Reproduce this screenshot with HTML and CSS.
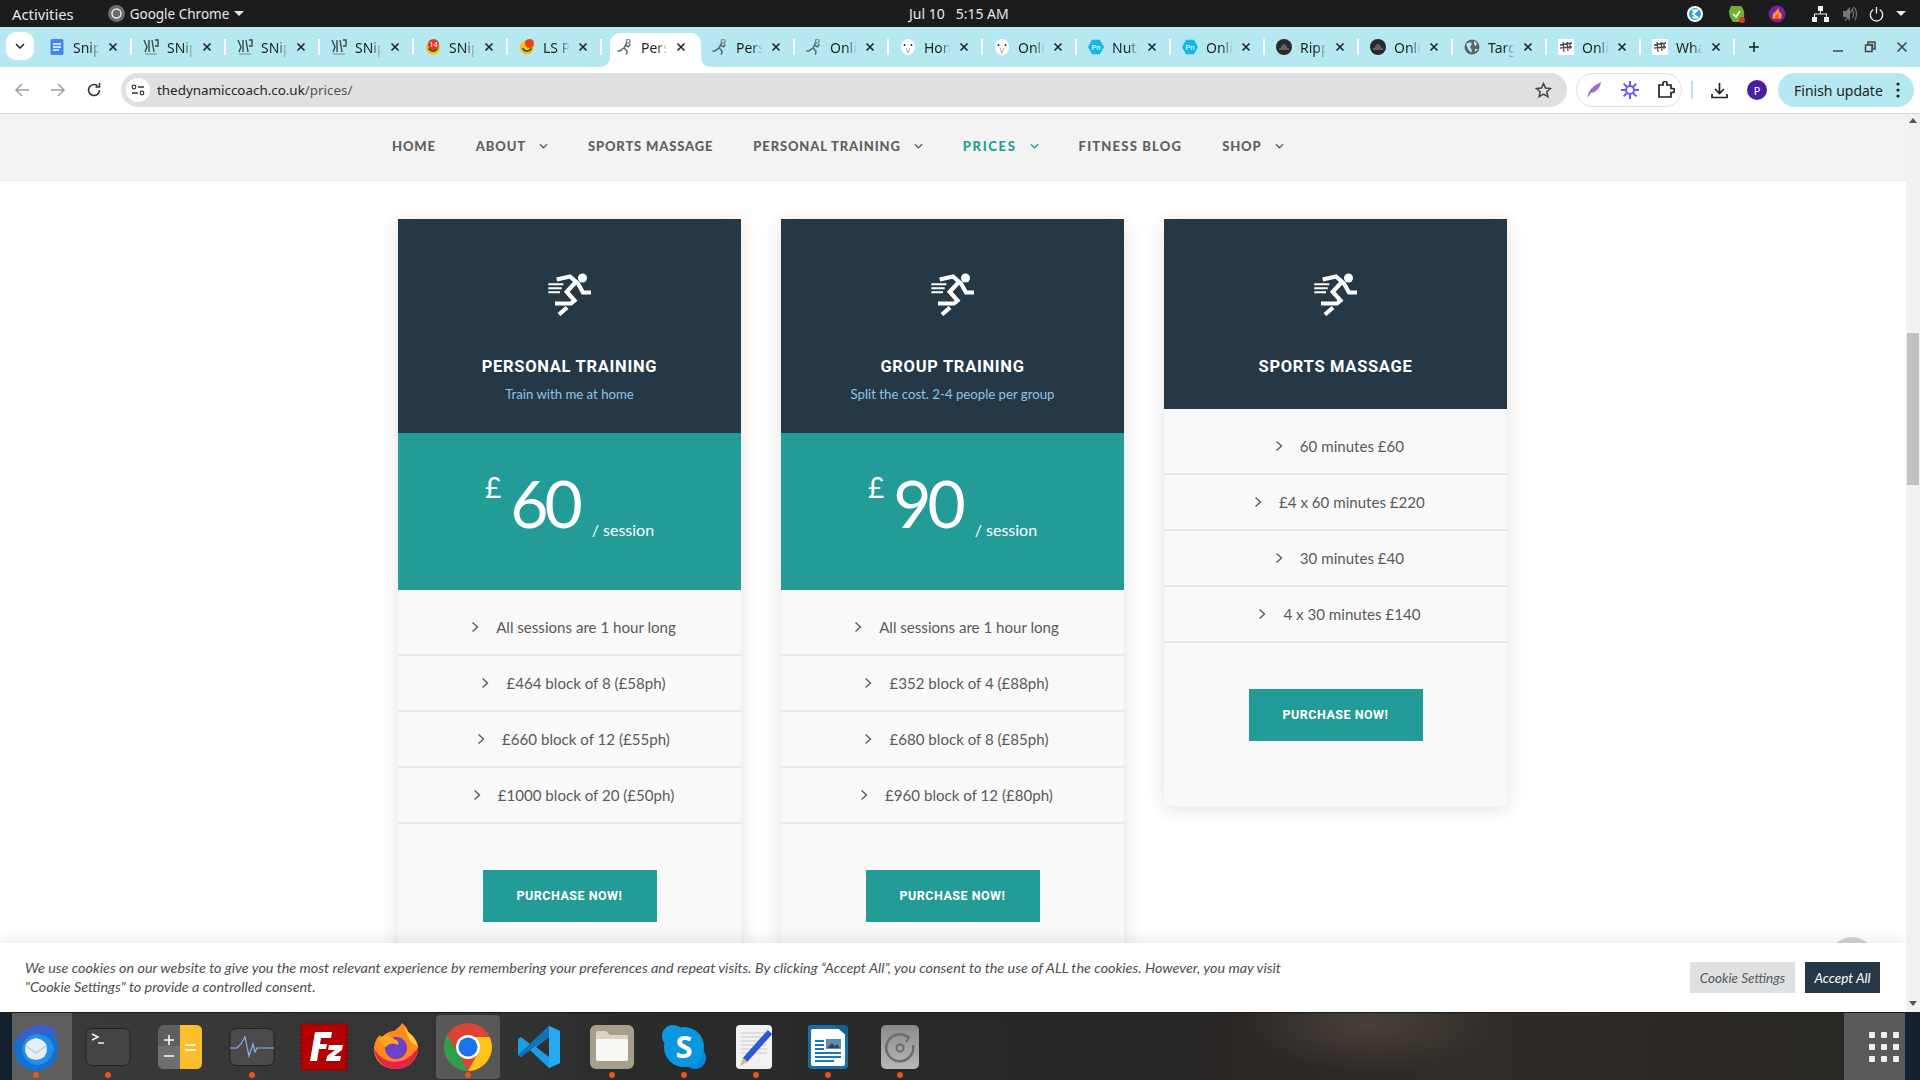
FILE: index.html
```html
<!DOCTYPE html>
<html lang="en">
<head>
    <meta charset="UTF-8">
    <title>Personal Training Prices</title>
    <link rel="stylesheet" href="styles.css">
</head>
<body>
    <svg class="defs" width="0" height="0">
        <symbol id="runner" viewBox="0 0 43 43">
            <circle cx="34.5" cy="5" r="4.5" fill="currentColor"/>
            <path d="M8.7 6.5 22 3.500 30 10.500 35 19.500H43M27 10 18.700 18.700 26.500 27.500 23 30.500H7M19 34.500 11 41.500" fill="none" stroke="currentColor" stroke-width="4.200"/>
            <path d="M.3 11.300H15.300M.3 15.300H13.700M.3 19.300H12" fill="none" stroke="currentColor" stroke-width="2"/>
        </symbol>
        <symbol id="close" viewBox="0 0 10 10">
            <path d="M1.500 1.500 8.500 8.500M8.500 1.500 1.500 8.500" fill="none" stroke="currentColor" stroke-width="1.600"/>
        </symbol>
        <symbol id="chev" viewBox="0 0 8 12">
            <path d="M1.500 1.500 6.500 6 1.500 10.500" fill="none" stroke="currentColor" stroke-width="1.400"/>
        </symbol>
        <symbol id="chev-down" viewBox="0 0 10 6">
            <path d="M1 1 5 5 9 1" fill="none" stroke="currentColor" stroke-width="1.500"/>
        </symbol>
        <symbol id="fav-snip" viewBox="0 0 16 16">
            <rect width="16" height="16" fill="#b6e8f1"/>
            <path d="M1 1 4 8 2 13M6 1V13M9 1 11 13M12 1 15 1 15 7 12 7" fill="none" stroke="#3d4a4a" stroke-width="1.400"/>
            <path d="M2 15H14" stroke="#7a8a8a" stroke-width="1"/>
        </symbol>
        <symbol id="fav-smile" viewBox="0 0 16 16">
            <circle cx="8" cy="8.500" r="7" fill="#f1c40f"/>
            <path d="M3.500 9.500Q8 15 12.500 9.500" fill="none" stroke="#333" stroke-width="1.500"/>
        </symbol>
        <symbol id="fav-run" viewBox="0 0 43 43">
            <circle cx="30" cy="6" r="5" fill="none" stroke="#6fa09c" stroke-width="4"/>
            <path d="M26 10 19 24 27 33 25 42M19 24 8 32H1M22 16 32 22M36 14 30 22" fill="none" stroke="#596a6a" stroke-width="4"/>
        </symbol>
        <symbol id="fav-owl" viewBox="0 0 16 16">
            <ellipse cx="8" cy="8" rx="7" ry="8" fill="#fff"/>
            <path d="M4.500 5V7M11.500 5V7" stroke="#333" stroke-width="1.500"/>
            <path d="M6 9 8 14 10 9" fill="none" stroke="#aaa" stroke-width="1"/>
        </symbol>
        <symbol id="fav-pn" viewBox="0 0 16 16">
            <path d="M4 .8H12L16 8 12 15.200H4L0 8Z" fill="#16b8e0"/>
            <text x="8" y="10.800" font-size="7.500" text-anchor="middle" fill="#fff" font-family="Roboto, sans-serif">Pn</text>
        </symbol>
        <symbol id="fav-dark" viewBox="0 0 16 16">
            <circle cx="8" cy="8" r="8" fill="#2a2a2a"/>
            <path d="M3 10H13M5 8H11M6.500 6H9.500" stroke="#9a9a9a" stroke-width="1.200"/>
        </symbol>
        <symbol id="fav-globe" viewBox="0 0 16 16">
            <circle cx="8" cy="8" r="7.500" fill="#5f6368"/>
            <path d="M2 5 6 3 8 5 6 8 8 11 7 14 4 10ZM10 2 13 4 12 7 10 6ZM11 10H14L11 13Z" fill="#b6e8f1"/>
        </symbol>
        <symbol id="fav-sketch" viewBox="0 0 16 16">
            <rect width="16" height="16" fill="#fff"/>
            <path d="M2 6 14 4M2 9 14 8M5 3 6 13M9 3 10 12M12 4 12 10" stroke="#4a4a4a" stroke-width="1.300"/>
        </symbol>
    </svg>

    <header class="topbar">
        <span class="top-left">Activities</span>
        <span class="top-app">
            <svg width="17" height="17" viewBox="0 0 17 17"><circle cx="8.500" cy="8.500" r="8.500" fill="#6b6b6b"/><circle cx="8.500" cy="8.500" r="4.500" fill="none" stroke="#e8e8e8" stroke-width="1.500"/></svg>
            Google Chrome
            <i class="caret"></i>
        </span>
        <span class="clock">Jul 10 &nbsp; 5:15 AM</span>
        <div class="tray">
            <svg class="tray-a" width="18" height="18" viewBox="0 0 18 18"><circle cx="9" cy="9" r="8" fill="#fff"/><circle cx="9" cy="9" r="6" fill="#2fa7c6"/><path d="M6 5.500H11L7 9 11.500 12.500H6.500" fill="none" stroke="#fff" stroke-width="1.800"/></svg>
            <svg class="tray-b" width="18" height="18" viewBox="0 0 18 18"><path d="M3 1H13Q17 5 16 12L11 17H5Q1 12 1 6Z" fill="#6fae2e"/><path d="M5 9 8 12 12 6" fill="none" stroke="#fff" stroke-width="1.700"/><circle cx="14" cy="15" r="3" fill="#e0352b"/></svg>
            <svg class="tray-c" width="18" height="18" viewBox="0 0 18 18"><circle cx="9" cy="9" r="8.500" fill="#7d1e9c"/><path d="M5 14Q3 9 7 7 8 5 11 3 10 7 13 8 15 12 12 14Z" fill="#f59a23"/><path d="M7 14Q7 10 10 9 10 12 11.500 14Z" fill="#f04a3a"/></svg>
            <svg class="tray-net" width="17" height="16" viewBox="0 0 17 16"><path d="M6 0H11V5H6ZM0 11H5V16H0ZM12 11H17V16H12ZM8 5H9V7.500H15V11H14V8.500H3V11H2V7.500H8Z" fill="#f2f2f2"/></svg>
            <svg class="tray-vol" width="15" height="16" viewBox="0 0 15 16"><path d="M0 5H3L7 1V15L3 11H0Z" fill="#777"/><path d="M9.500 4Q11.500 8 9.500 12M12 2Q15 8 12 14M2 15 11 1" fill="none" stroke="#777" stroke-width="1.200"/></svg>
            <svg class="tray-pow" width="15" height="16" viewBox="0 0 15 16"><path d="M4.300 3.500A6.200 6.200 0 1 0 10.700 3.500M7.500 1V7.500" fill="none" stroke="#eee" stroke-width="1.300"/></svg>
            <i class="caret tray-caret"></i>
        </div>
    </header>

    <nav class="tabstrip">
        <button class="tab-search"><svg width="10" height="6"><use href="#chev-down"/></svg></button>
        <div class="tabs">
            <div class="tab"><svg class="fav" viewBox="0 0 16 16"><rect x="1.500" width="13" height="16" rx="1.500" fill="#4285f4"/><path d="M4 5H12M4 8H12M4 11H10" stroke="#fff" stroke-width="1.400"/></svg><span class="tab-label">Snip</span><svg class="tab-x"><use href="#close"/></svg></div>
            <div class="tab"><svg class="fav"><use href="#fav-snip"/></svg><span class="tab-label">SNip</span><svg class="tab-x"><use href="#close"/></svg></div>
            <div class="tab"><svg class="fav"><use href="#fav-snip"/></svg><span class="tab-label">SNip</span><svg class="tab-x"><use href="#close"/></svg></div>
            <div class="tab"><svg class="fav"><use href="#fav-snip"/></svg><span class="tab-label">SNip</span><svg class="tab-x"><use href="#close"/></svg></div>
            <div class="tab"><svg class="fav" viewBox="0 0 16 16"><use href="#fav-smile"/><circle cx="8.500" cy="5.500" r="5.500" fill="#e0352b"/><text x="8.500" y="8.200" font-size="7.500" text-anchor="middle" fill="#fff" font-family="Roboto, sans-serif">14</text></svg><span class="tab-label">SNip</span><svg class="tab-x"><use href="#close"/></svg></div>
            <div class="tab"><svg class="fav" viewBox="0 0 16 16"><use href="#fav-smile"/><circle cx="10.500" cy="4.500" r="4.500" fill="#e8431f"/></svg><span class="tab-label">LS Pe</span><svg class="tab-x"><use href="#close"/></svg></div>
            <div class="tab tab-active"><svg class="fav"><use href="#fav-run"/></svg><span class="tab-label">Pers</span><svg class="tab-x"><use href="#close"/></svg></div>
            <div class="tab"><svg class="fav"><use href="#fav-run"/></svg><span class="tab-label">Pers</span><svg class="tab-x"><use href="#close"/></svg></div>
            <div class="tab"><svg class="fav"><use href="#fav-run"/></svg><span class="tab-label">Onli</span><svg class="tab-x"><use href="#close"/></svg></div>
            <div class="tab"><svg class="fav"><use href="#fav-owl"/></svg><span class="tab-label">Hom</span><svg class="tab-x"><use href="#close"/></svg></div>
            <div class="tab"><svg class="fav"><use href="#fav-owl"/></svg><span class="tab-label">Onli</span><svg class="tab-x"><use href="#close"/></svg></div>
            <div class="tab"><svg class="fav"><use href="#fav-pn"/></svg><span class="tab-label">Nutr</span><svg class="tab-x"><use href="#close"/></svg></div>
            <div class="tab"><svg class="fav"><use href="#fav-pn"/></svg><span class="tab-label">Onli</span><svg class="tab-x"><use href="#close"/></svg></div>
            <div class="tab"><svg class="fav"><use href="#fav-dark"/></svg><span class="tab-label">Ripp</span><svg class="tab-x"><use href="#close"/></svg></div>
            <div class="tab"><svg class="fav"><use href="#fav-dark"/></svg><span class="tab-label">Onli</span><svg class="tab-x"><use href="#close"/></svg></div>
            <div class="tab"><svg class="fav"><use href="#fav-globe"/></svg><span class="tab-label">Targ</span><svg class="tab-x"><use href="#close"/></svg></div>
            <div class="tab"><svg class="fav"><use href="#fav-sketch"/></svg><span class="tab-label">Onli</span><svg class="tab-x"><use href="#close"/></svg></div>
            <div class="tab"><svg class="fav"><use href="#fav-sketch"/></svg><span class="tab-label">Wha</span><svg class="tab-x"><use href="#close"/></svg></div>
        </div>
        <svg class="tab-new" width="12" height="12" viewBox="0 0 12 12"><path d="M6 1V11M1 6H11" stroke="#1f1f1f" stroke-width="1.600"/></svg>
        <div class="win-controls">
            <svg width="12" height="12" viewBox="0 0 12 12"><path d="M1 10H11" stroke="#444" stroke-width="1.500"/></svg>
            <svg width="12" height="12" viewBox="0 0 12 12"><path d="M4 1H11V8H8.500V3.500H4ZM1.500 4H8V10.500H1.500Z" fill="none" stroke="#444" stroke-width="1.500"/></svg>
            <svg width="12" height="12" viewBox="0 0 12 12"><path d="M1.500 1.500 10.500 10.500M10.500 1.500 1.500 10.500" stroke="#444" stroke-width="1.600"/></svg>
        </div>
    </nav>

    <div class="toolbar">
        <svg class="tb-icon" viewBox="0 0 16 16"><path d="M15 8H2M8 2 2 8 8 14" fill="none" stroke="#9aa0a6" stroke-width="1.500"/></svg>
        <svg class="tb-icon" viewBox="0 0 16 16"><path d="M1 8H14M8 2 14 8 8 14" fill="none" stroke="#9aa0a6" stroke-width="1.500"/></svg>
        <svg class="tb-icon" viewBox="0 0 16 16"><path d="M13.500 8A5.500 5.500 0 1 1 11.500 3.800M13.500 1V5H9.500" fill="none" stroke="#333" stroke-width="1.600"/></svg>
        <div class="address">
            <span class="site-badge"><svg width="14" height="12" viewBox="0 0 14 12"><circle cx="3" cy="3" r="1.800" fill="none" stroke="#333" stroke-width="1.200"/><path d="M7 3H13M1 9H7" stroke="#333" stroke-width="1.400"/><circle cx="11" cy="9" r="1.800" fill="none" stroke="#333" stroke-width="1.200"/></svg></span>
            <span class="url">thedynamiccoach.co.uk<span class="url-path">/prices/</span></span>
            <svg class="star" width="17" height="16" viewBox="0 0 17 16"><path d="M8.500 1.500 10.500 6 15.500 6.500 11.800 9.800 12.900 14.700 8.500 12.100 4.100 14.700 5.200 9.800 1.500 6.500 6.500 6Z" fill="none" stroke="#444" stroke-width="1.500"/></svg>
        </div>
        <div class="ext-pill">
            <svg width="16" height="18" viewBox="0 0 16 18"><path d="M1 17Q3 6 15 1 14 10 5 12Z" fill="#9b6fc9"/></svg>
            <svg width="18" height="18" viewBox="0 0 18 18"><circle cx="9" cy="9" r="4" fill="none" stroke="#6a5cff" stroke-width="2"/><path d="M9 0V5M9 13V18M0 9H5M13 9H18M2.600 2.600 6 6M12 12 15.400 15.400M15.400 2.600 12 6M6 12 2.600 15.400" stroke="#6a5cff" stroke-width="2"/></svg>
            <svg width="18" height="18" viewBox="0 0 18 18"><path d="M2 4H6V2.500A2 2 0 0 1 10 2.500V4H14V7.500H15.500A2 2 0 0 1 15.500 11.500H14V16H2Z" fill="none" stroke="#222" stroke-width="1.700"/></svg>
        </div>
        <i class="tb-divider"></i>
        <svg class="tb-download" width="17" height="17" viewBox="0 0 17 17"><path d="M8.500 1V11M4 7 8.500 11.500 13 7M1 12V15.500H16V12" fill="none" stroke="#222" stroke-width="1.700"/></svg>
        <span class="avatar">P</span>
        <div class="finish-pill">Finish update<svg width="4" height="16" viewBox="0 0 4 16"><circle cx="2" cy="2" r="1.600" fill="#222"/><circle cx="2" cy="8" r="1.600" fill="#222"/><circle cx="2" cy="14" r="1.600" fill="#222"/></svg></div>
    </div>

    <div class="viewport">
        <main class="page">
            <div class="site-nav">
                <a class="nav-link">HOME</a>
                <a class="nav-link">ABOUT<svg class="nav-chev"><use href="#chev-down"/></svg></a>
                <a class="nav-link">SPORTS MASSAGE</a>
                <a class="nav-link">PERSONAL TRAINING<svg class="nav-chev"><use href="#chev-down"/></svg></a>
                <a class="nav-link nav-current nav-wide">PRICES<svg class="nav-chev"><use href="#chev-down"/></svg></a>
                <a class="nav-link nav-wide">FITNESS BLOG</a>
                <a class="nav-link">SHOP<svg class="nav-chev"><use href="#chev-down"/></svg></a>
            </div>

            <section class="pricing">
                <article class="card">
                    <div class="card-head">
                        <svg class="runner"><use href="#runner"/></svg>
                        <h3>PERSONAL TRAINING</h3>
                        <p>Train with me at home</p>
                    </div>
                    <div class="card-price">
                        <span class="currency">£</span><span class="amount">60</span><span class="per">/ session</span>
                    </div>
                    <ul class="features">
                        <li><svg class="li-chev"><use href="#chev"/></svg>All sessions are 1 hour long</li>
                        <li><svg class="li-chev"><use href="#chev"/></svg>£464 block of 8 (£58ph)</li>
                        <li><svg class="li-chev"><use href="#chev"/></svg>£660 block of 12 (£55ph)</li>
                        <li><svg class="li-chev"><use href="#chev"/></svg>£1000 block of 20 (£50ph)</li>
                    </ul>
                    <div class="card-foot"><a class="buy">PURCHASE NOW!</a></div>
                </article>

                <article class="card">
                    <div class="card-head">
                        <svg class="runner"><use href="#runner"/></svg>
                        <h3>GROUP TRAINING</h3>
                        <p>Split the cost. 2-4 people per group</p>
                    </div>
                    <div class="card-price">
                        <span class="currency">£</span><span class="amount">90</span><span class="per">/ session</span>
                    </div>
                    <ul class="features">
                        <li><svg class="li-chev"><use href="#chev"/></svg>All sessions are 1 hour long</li>
                        <li><svg class="li-chev"><use href="#chev"/></svg>£352 block of 4 (£88ph)</li>
                        <li><svg class="li-chev"><use href="#chev"/></svg>£680 block of 8 (£85ph)</li>
                        <li><svg class="li-chev"><use href="#chev"/></svg>£960 block of 12 (£80ph)</li>
                    </ul>
                    <div class="card-foot"><a class="buy">PURCHASE NOW!</a></div>
                </article>

                <article class="card">
                    <div class="card-head">
                        <svg class="runner"><use href="#runner"/></svg>
                        <h3>SPORTS MASSAGE</h3>
                    </div>
                    <ul class="features">
                        <li><svg class="li-chev"><use href="#chev"/></svg>60 minutes £60</li>
                        <li><svg class="li-chev"><use href="#chev"/></svg>£4 x 60 minutes £220</li>
                        <li><svg class="li-chev"><use href="#chev"/></svg>30 minutes £40</li>
                        <li><svg class="li-chev"><use href="#chev"/></svg>4 x 30 minutes £140</li>
                    </ul>
                    <div class="card-foot"><a class="buy">PURCHASE NOW!</a></div>
                </article>
            </section>
            <i class="to-top"></i>
            <div class="cookie">
                <p>We use cookies on our website to give you the most relevant experience by remembering your preferences and repeat visits. By clicking “Accept All”, you consent to the use of ALL the cookies. However, you may visit "Cookie Settings" to provide a controlled consent.</p>
                <a class="cookie-btn">Cookie Settings</a>
                <a class="cookie-btn cookie-accept">Accept All</a>
            </div>
        </main>
        <aside class="scrollbar">
            <i class="arrow-up"></i>
            <i class="thumb"></i>
            <i class="arrow-down"></i>
        </aside>
    </div>

    <footer class="dock">
        <div class="dock-item dock-focused">
            <svg viewBox="0 0 48 48"><circle cx="24" cy="26" r="22" fill="#1272d4"/><path d="M7 13Q16 1 33 2 44 4 47 13 38 8 31 11 35 14 38 21L30 16Q17 14 10 24Z" fill="#3a5fc8"/><path d="M10 26Q12 12 26 11 40 13 42 26 38 42 24 42 12 40 10 26Z" fill="#2390ea"/><path d="M13 26Q13 17 24 15 35 17 35 26 35 36 24 37 13 36 13 26Z" fill="#e6eef9"/><path d="M14 23 24 30 34 23" fill="none" stroke="#bccfeb" stroke-width="1.500"/></svg>
            <i class="dot"></i>
        </div>
        <div class="dock-item">
            <svg viewBox="0 0 48 48"><rect x="2" y="5.500" width="44" height="37" rx="6" fill="#444" stroke="#222"/><path d="M8 11 14 14 8 17M14 20H20" fill="none" stroke="#f2f2f2" stroke-width="1.500"/></svg>
            <i class="dot"></i>
        </div>
        <div class="dock-item">
            <svg viewBox="0 0 48 48"><rect x="2" y="2" width="44" height="44" rx="6" fill="#5e5e5e"/><path d="M2 23H24V46H8Q2 46 2 40Z" fill="#6f6f6f"/><path d="M24 2H40Q46 2 46 8V40Q46 46 40 46H24Z" fill="#fbbd2b"/><path d="M8 17H18M13 12V22M8 33H18" stroke="#fff" stroke-width="1.500"/><path d="M29 22H40M29 27H40" stroke="#fff" stroke-width="1.500"/></svg>
        </div>
        <div class="dock-item">
            <svg viewBox="0 0 48 48"><rect x="2" y="5.500" width="44" height="37" rx="6" fill="#4a4a4a" stroke="#222"/><path d="M2 25H9L13 21 17 14 21 33 25 21 27 29 29 25H46" fill="none" stroke="#8fb0ef" stroke-width="1.200"/></svg>
            <i class="dot"></i>
        </div>
        <div class="dock-item">
            <svg viewBox="0 0 48 48"><rect x="1" y="1" width="46" height="46" fill="#b30000" stroke="#8f0000" stroke-width="2" stroke-dasharray="2 2"/><path d="M10 38 15 9H32L31 15H21L20 21H27L26 26H19L17 38ZM26 38 27 33 35 27H28L29 22H43L42 27 34 33H41L40 38Z" fill="#fff"/></svg>
        </div>
        <div class="dock-item">
            <svg viewBox="0 0 48 48"><path d="M24 46C10 46 1 36 2 24 3 18 5 14 8 12L10 15C13 10 18 8 22 8 26 5 29 2 30 0 34 3 36 6 36 9 42 13 46 18 46 25 46 37 36 46 24 46Z" fill="#ff8a1c"/><path d="M24 46C12 46 3 37 2 25 8 38 22 42 34 36 41 32 45 26 46 24 46 37 36 46 24 46Z" fill="#e5234f"/><path d="M32 5Q36 8 36 9 43 14 46 24L38 18Z" fill="#ffd13b"/><circle cx="24" cy="25" r="11" fill="#6f3fc4"/><path d="M7 15Q15 9 22 16 28 18 26 22 18 18 14 24 9 21 7 15Z" fill="#ffa51f"/></svg>
        </div>
        <div class="dock-item dock-active">
            <svg viewBox="0 0 48 48"><circle cx="24" cy="24" r="24" fill="#dd4435"/><path d="M3.200 12 14 30 24 48C11 48 0 37 0 24 0 19.600 1.200 15.500 3.200 12Z" fill="#2f9e4f"/><path d="M24 14H45.500C47 17 48 20.500 48 24 48 37 37 48 24 48L34 30Z" fill="#fcc419"/><circle cx="24" cy="24" r="12" fill="#fff"/><circle cx="24" cy="24" r="9.500" fill="#1a73e8"/></svg>
            <i class="dot"></i>
        </div>
        <div class="dock-item">
            <svg viewBox="0 0 48 48"><path d="M33 3 44 8V40L33 45 14 27 5 34 2 32V16L5 14 14 21ZM33 14 20 24 33 34Z" fill="#1f9ce8"/><path d="M33 3 44 8V40L33 45Z" fill="#29a9f1"/><path d="M5 34 2 32 33 3V14L14 27Z" fill="#0d73bb"/></svg>
        </div>
        <div class="dock-item">
            <svg viewBox="0 0 48 48"><rect x="2" y="2" width="44" height="44" rx="6" fill="#a59f8c"/><path d="M8 10Q8 8 10 8H18L22 12H38Q40 12 40 14V20H8Z" fill="#d8d5c8"/><path d="M8 16H38Q40 16 40 18V36Q40 38 38 38H10Q8 38 8 36Z" fill="#f8f7f3"/></svg>
            <i class="dot"></i>
        </div>
        <div class="dock-item">
            <svg viewBox="0 0 48 48"><circle cx="13" cy="13" r="11" fill="#0a9ae0"/><circle cx="35" cy="35" r="11" fill="#0a87d6"/><circle cx="24" cy="24" r="20" fill="#0b97e0"/><text x="24" y="35" font-size="31" font-weight="700" text-anchor="middle" fill="#fff" font-family="Open Sans, sans-serif">S</text></svg>
            <i class="dot"></i>
        </div>
        <div class="dock-item">
            <svg viewBox="0 0 48 48"><rect x="4" y="2" width="36" height="44" rx="4" fill="#f2f2f2"/><path d="M9 10H35M9 14H35M9 18H35M9 22H35M9 26H35M9 30H35" stroke="#c9c9c9"/><path d="M38 9 13 37" stroke="#2c57d6" stroke-width="6"/><path d="M11 35 16 39 8 43Z" fill="#d9b98c"/></svg>
            <i class="dot"></i>
        </div>
        <div class="dock-item">
            <svg viewBox="0 0 48 48"><path d="M6 2H36L44 10V42Q44 46 40 46H8Q4 46 4 42V4Q4 2 6 2Z" fill="#1a6da5"/><rect x="7" y="6" width="34" height="37" rx="2" fill="#fff"/><path d="M30 2H41Q44 2 44 5V14Z" fill="#17608f"/><rect x="22" y="16" width="15" height="10" fill="#5f8cb0"/><path d="M23 25 28 20 31 23 33 21 36 25Z" fill="#33485a"/><path d="M11 18H20M11 22H20M11 26H20M11 30H37M11 34H37M11 38H30" stroke="#1a7ab8" stroke-width="2"/></svg>
            <i class="dot"></i>
        </div>
        <div class="dock-item">
            <svg viewBox="0 0 48 48"><defs><linearGradient id="diskbg" x1="0" y1="0" x2="0" y2="1"><stop offset="0" stop-color="#8a8a8a"/><stop offset="1" stop-color="#b8b8b8"/></linearGradient></defs><rect x="5" y="2" width="38" height="44" rx="5" fill="url(#diskbg)"/><path d="M32 14A13.500 13.500 0 1 0 37 22" fill="none" stroke="#6d6d6d" stroke-width="2.500"/><path d="M28 12 33 14 30 19" fill="none" stroke="#6d6d6d" stroke-width="2"/><circle cx="24" cy="25" r="3.500" fill="none" stroke="#6d6d6d" stroke-width="2"/></svg>
            <i class="dot"></i>
        </div>
        <div class="dock-apps">
            <i></i><i></i><i></i><i></i><i></i><i></i><i></i><i></i><i></i>
        </div>
    </footer>
</body>
</html>
```

FILE: styles.css
```css
* {
    box-sizing: border-box;
}
html, body {
    margin: 0;
    height: 1080px;
    overflow: hidden;
}
body {
    display: flex;
    flex-direction: column;
    background: #fff;
    font-family: "Noto Sans", sans-serif;
}
.defs {
    position: absolute;
}
i {
    display: block;
}
svg {
    flex: none;
}

/* desktop top bar */
.topbar {
    height: 27px;
    flex: none;
    display: flex;
    align-items: center;
    position: relative;
    background: #1c1c1c;
    color: #e8e8e8;
    font-size: 14px;
}
.top-left {
    margin-left: 12px;
    font-size: 14.8px;
}
.top-app {
    margin-left: 34px;
    display: flex;
    align-items: center;
    gap: 5px;
    font-size: 13.5px;
}
.caret {
    width: 0;
    height: 0;
    border-left: 5px solid transparent;
    border-right: 5px solid transparent;
    border-top: 5px solid #e8e8e8;
}
.clock {
    position: absolute;
    left: 909px;
}
.tray {
    margin-left: auto;
    display: flex;
    align-items: center;
    padding-right: 14px;
}
.tray-a {
    margin-right: 2px;
}
.tray-b, .tray-c {
    margin-left: 22px;
}
.tray-net {
    margin-left: 26px;
}
.tray-vol {
    margin-left: 14px;
}
.tray-pow {
    margin-left: 10.5px;
}
.tray-caret {
    margin-left: 12.5px;
}

/* chrome tabs */
.tabstrip {
    height: 40px;
    flex: none;
    display: flex;
    align-items: center;
    background: #b6e8f1;
    position: relative;
    color: #1f1f1f;
}
.tab-search {
    width: 28px;
    height: 28px;
    margin: -2px 4px 0 6px;
    border: none;
    border-radius: 10px;
    background: #fff;
    padding: 0;
    display: flex;
    align-items: center;
    justify-content: center;
}
.tab-search svg {
    color: #222;
}
.tabs {
    display: flex;
    height: 100%;
}
.tab {
    width: 94px;
    height: 100%;
    padding: 0 0 0 11px;
    display: flex;
    align-items: center;
    position: relative;
    font-size: 14px;
}
.tab::after {
    content: "";
    position: absolute;
    right: 0;
    top: 12px;
    height: 16px;
    width: 2px;
    background: #fff;
}
.tab-active {
    width: 91px;
    height: 34px;
    margin: 6px 0 0 8px;
    padding: 0 0 6px 7px;
    background: #fff;
    border-radius: 10px 10px 0 0;
}
/* the flared feet of the active tab */
.tab-active::before, .tab-active::after {
    content: "";
    position: absolute;
    top: auto;
    bottom: 0;
    width: 10px;
    height: 10px;
    background: radial-gradient(circle at 0 0, transparent 10px, #fff 10px);
}
.tab-active::before {
    left: -10px;
}
.tab-active::after {
    right: -10px;
    background: radial-gradient(circle at 100% 0, transparent 10px, #fff 10px);
}
.fav {
    width: 16px;
    height: 16px;
}
.tab-label {
    width: 29px;
    margin-left: 8px;
    overflow: hidden;
    white-space: nowrap;
    -webkit-mask-image: linear-gradient(90deg, #000 55%, transparent 92%);
    mask-image: linear-gradient(90deg, #000 55%, transparent 92%);
}
.tab-x {
    width: 10px;
    height: 10px;
    margin-left: 6px;
    color: #222;
}
.tab-new {
    margin-left: 13px;
}
.win-controls {
    margin-left: auto;
    display: flex;
    gap: 20px;
    padding-right: 12px;
}

/* chrome toolbar */
.toolbar {
    height: 47px;
    flex: none;
    display: flex;
    align-items: center;
    background: #fff;
    border-bottom: 1px solid #d8d8d8;
    border-radius: 8px 8px 0 0;
    padding-left: 14px;
    position: relative;
}
.tb-icon {
    width: 16px;
    height: 16px;
    margin-right: 20px;
}
.address {
    width: 1446px;
    height: 34px;
    margin-left: -1px;
    border-radius: 17px;
    background: #e0e0e0;
    display: flex;
    align-items: center;
    padding: 0 15px 0 5px;
    font-size: 13.4px;
    color: #1f1f1f;
}
.site-badge {
    width: 24px;
    height: 24px;
    border-radius: 50%;
    background: #fff;
    display: flex;
    align-items: center;
    justify-content: center;
}
.url {
    margin-left: 7px;
}
.url-path {
    color: #555;
}
.star {
    margin-left: auto;
}
.ext-pill {
    width: 106px;
    height: 34px;
    margin-left: 9px;
    border: 1px solid #e0e0e0;
    border-radius: 17px;
    display: flex;
    align-items: center;
    justify-content: space-between;
    padding: 0 6px 0 9px;
}
.tb-divider {
    width: 2px;
    height: 18px;
    margin-left: 9px;
    background: #b6e8f1;
}
.tb-download {
    margin-left: 18px;
}
.avatar {
    width: 20px;
    height: 20px;
    margin-left: 19px;
    border-radius: 50%;
    background: #4a1f9e;
    color: #fff;
    font-size: 11px;
    display: flex;
    align-items: center;
    justify-content: center;
}
.finish-pill {
    width: 136px;
    height: 34px;
    margin-left: 11px;
    border-radius: 17px;
    background: #b6e8f1;
    display: flex;
    align-items: center;
    justify-content: space-between;
    padding: 0 14px 0 16px;
    font-size: 14px;
    color: #1f1f1f;
}

/* page area */
.viewport {
    flex: 1;
    min-height: 0;
    display: flex;
}
.page {
    flex: 1;
    position: relative;
    overflow: hidden;
    background: #fff;
    font-family: "Lato", sans-serif;
}
.site-nav {
    height: 67px;
    background: #f3f3f3;
    border-bottom: 1px solid #eaeaea;
    display: flex;
    align-items: center;
    gap: 40px;
    padding: 0 0 2px 392px;
}
.nav-link {
    display: flex;
    align-items: center;
    font-size: 13px;
    font-weight: 900;
    letter-spacing: .85px;
    color: #5f5f5f;
}
.nav-wide {
    letter-spacing: 1.2px;
}
.nav-current {
    color: #1fa09b;
    letter-spacing: 1.7px;
}
.nav-chev {
    width: 9px;
    height: 6px;
    margin-left: 13px;
}
.pricing {
    display: flex;
    align-items: flex-start;
    gap: 40px;
    margin: 38px 0 0 398px;
}
.card {
    width: 343px;
    flex: none;
    background: #f9f9f9;
    box-shadow: 0 3px 18px rgba(0, 0, 0, .12);
}
.card-head {
    background: #263845;
    color: #fff;
    text-align: center;
    padding: 54px 0 31px;
}
.runner {
    display: block;
    width: 43px;
    height: 43px;
    margin: 0 auto 40px;
    color: #fff;
}
.card-head h3 {
    margin: 0;
    font-family: "Roboto", sans-serif;
    font-size: 16.5px;
    line-height: 22px;
    font-weight: 700;
    letter-spacing: .7px;
}
.card-head p {
    margin: 6px 0 -3px;
    font-size: 13.2px;
    line-height: 21px;
    color: #8cc4ea;
}
.card-price {
    height: 157px;
    background: #239c98;
    color: #fff;
    display: flex;
    align-items: baseline;
    justify-content: center;
    padding-top: 27px;
}
.currency {
    font-size: 28px;
    line-height: 1;
    transform: translateY(-30px);
}
.amount {
    font-size: 66px;
    line-height: 86px;
    letter-spacing: -4px;
    margin-left: 9px;
}
.per {
    font-size: 16px;
    margin-left: 13px;
    transform: translateY(8px);
}
.features {
    list-style: none;
    margin: 0;
    padding: 10px 0 0;
}
.features li {
    height: 56px;
    display: flex;
    align-items: center;
    justify-content: center;
    padding-left: 8px;
    border-bottom: 2px solid #e9e9e9;
    font-size: 15.1px;
    color: #5a5a5a;
}
.li-chev {
    width: 8px;
    height: 12px;
    margin-right: 17px;
}
.card-foot {
    padding: 46px 0 65px;
    display: flex;
    justify-content: center;
}
.buy {
    width: 174px;
    height: 52px;
    padding-bottom: 1px;
    background: #239c98;
    color: #fff;
    display: flex;
    align-items: center;
    justify-content: center;
    font-family: "Roboto", sans-serif;
    font-size: 12.5px;
    font-weight: 700;
    letter-spacing: .5px;
}
.to-top {
    position: absolute;
    left: 1829px;
    top: 823px;
    width: 46px;
    height: 46px;
    border-radius: 50%;
    background: #d4d4d4;
}
.cookie {
    position: absolute;
    left: 0;
    right: 0;
    bottom: 0;
    height: 69px;
    background: #fff;
    box-shadow: 0 -4px 14px rgba(0, 0, 0, .08);
    display: flex;
    align-items: center;
    padding: 0 26px 0 25px;
    font-style: italic;
    font-size: 14.35px;
}
.cookie p {
    width: 1290px;
    margin: 0 auto 0 0;
    line-height: 18.5px;
    color: #4d4d4d;
}
.cookie-btn {
    width: 105px;
    height: 31px;
    display: flex;
    align-items: center;
    justify-content: center;
    background: #dee0e2;
    color: #56585a;
    font-size: 13.5px;
}
.cookie-accept {
    width: 75px;
    margin-left: 10px;
    background: #263845;
    color: #fff;
}
.scrollbar {
    width: 14px;
    flex: none;
    background: #f1f1f1;
    position: relative;
}
.arrow-up, .arrow-down {
    position: absolute;
    left: 3px;
    width: 0;
    height: 0;
    border-left: 4px solid transparent;
    border-right: 4px solid transparent;
}
.arrow-up {
    top: 4px;
    border-bottom: 5px solid #555;
}
.arrow-down {
    bottom: 6px;
    border-top: 5px solid #555;
}
.thumb {
    position: absolute;
    left: 1px;
    right: 1px;
    top: 219px;
    height: 152px;
    background: #c1c1c1;
}

/* ubuntu dock */
.dock {
    height: 68px;
    flex: none;
    display: flex;
    position: relative;
    border-top: 1px solid #1a1a1a;
    background:
        radial-gradient(ellipse 130px 50px at 1370px 10px, #4a403a, transparent),
        linear-gradient(90deg, #13202e 0, #13202e 12px, #3a3a3a 12px, #343434 480px, #2a2c2c 620px, #26282a 960px, #2a2725 1240px, #302c28 1450px, #2a2824 1844px, #16202e 1844px);
}
.dock-item {
    width: 72px;
    position: relative;
    display: flex;
    align-items: center;
    justify-content: center;
}
.dock-item svg {
    width: 48px;
    height: 48px;
    position: relative;
    margin-top: 1px;
}
.dock-focused::before {
    content: "";
    position: absolute;
    left: 12px;
    right: 0;
    top: 0;
    bottom: 0;
    background: #5d5d5d;
}
.dock-active::before {
    content: "";
    position: absolute;
    left: 4px;
    right: 4px;
    top: 2px;
    bottom: 1px;
    border-radius: 4px;
    background: rgba(255, 255, 255, .18);
}
.dot {
    position: absolute;
    left: 33px;
    bottom: 2px;
    width: 6px;
    height: 6px;
    border-radius: 50%;
    background: #e95420;
}
.dock-apps {
    position: absolute;
    left: 1844px;
    top: 0;
    width: 61px;
    bottom: 0;
    background: #5a5a5a;
    display: grid;
    grid-template-columns: repeat(3, 6px);
    grid-auto-rows: 6px;
    gap: 6px;
    justify-content: center;
    align-content: center;
    padding-left: 19px;
}
.dock-apps i {
    background: #f0f0f0;
    border-radius: 1px;
}
```
